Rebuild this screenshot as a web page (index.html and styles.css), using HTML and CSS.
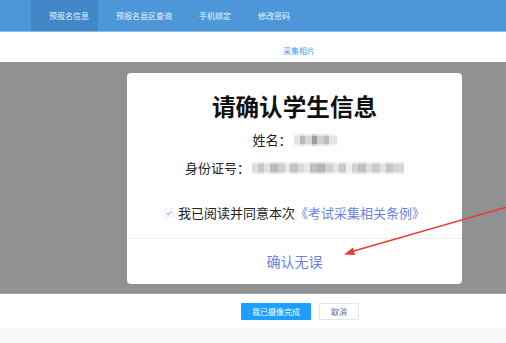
FILE: index.html
```html
<!DOCTYPE html>
<html lang="zh">
<head>
<meta charset="utf-8">
<link rel="stylesheet" href="styles.css">
</head>
<body>
<header class="nav">
  <ul class="nav-list">
    <li class="nav-item active">预报名信息</li>
    <li class="nav-item">预报名县区查询</li>
    <li class="nav-item">手机绑定</li>
    <li class="nav-item">修改密码</li>
  </ul>
</header>
<div class="tabbar"><span class="tab-title">采集相片</span></div>
<section class="overlay">
  <div class="modal">
    <div class="modal-body">
      <h1 class="modal-title">请确认学生信息</h1>
      <p class="info-line">姓名：<span class="blur blur-name"></span></p>
      <p class="info-line">身份证号：<span class="blur blur-id"></span></p>
      <p class="agree-line">
        <span class="checkbox"><svg viewBox="0 0 8 8" width="8" height="8"><path d="M1.6 4.2 L3.3 5.8 L6.5 2.3" fill="none" stroke="#5b9bf0" stroke-width="1"/></svg></span>
        我已阅读并同意本次<span class="link">《考试采集相关条例》</span>
      </p>
    </div>
    <div class="modal-footer">确认无误</div>
  </div>
</section>
<div class="actions">
  <button class="btn btn-primary">我已摄像完成</button>
  <button class="btn btn-default">取消</button>
</div>
<div class="page-bottom"></div>
<svg class="arrow" width="506" height="343" viewBox="0 0 506 343">
  <line x1="507" y1="207" x2="352" y2="251.5" stroke="#ec3a30" stroke-width="1.6"/>
  <polygon points="344,254.5 353,247.5 355,255" fill="#ec3a30"/>
</svg>
</body>
</html>
```

FILE: styles.css
```css
html, body {
  margin: 0;
  padding: 0;
}
body {
  width: 506px;
  height: 343px;
  overflow: hidden;
  position: relative;
  background: #f8f8f8;
  font-family: "Noto Sans CJK SC", "Microsoft YaHei", sans-serif;
}
.nav {
  height: 31px;
  background: #4d97d8;
  border-bottom: 1px solid #8cbbe6;
}
.nav-list {
  list-style: none;
  margin: 0;
  padding: 0 0 0 31px;
  display: flex;
  height: 31px;
}
.nav-item {
  padding: 0 9px 0 18px;
  font-size: 8px;
  line-height: 31px;
  color: #eaf3fc;
  white-space: nowrap;
}
.nav-item.active {
  background: #4187c8;
}
.tabbar {
  height: 30px;
  background: #fff;
  display: flex;
  justify-content: center;
  align-items: center;
  padding-left: 92px;
  box-sizing: border-box;
}
.tab-title {
  font-size: 8px;
  color: #3e9ff0;
  padding-top: 7px;
}
.overlay {
  height: 232px;
  background: #909192;
  padding: 11px 0 0 127px;
  box-sizing: border-box;
  border-bottom: 1px solid #a0a0a0;
}
.modal {
  width: 335px;
  height: 211px;
  background: #fff;
  border-radius: 4px;
  display: flex;
  flex-direction: column;
}
.modal-body {
  padding-top: 18px;
  text-align: center;
  border-bottom: 1px solid #eeeeee;
  height: 166px;
  box-sizing: border-box;
}
.modal-title {
  margin: 0;
  font-size: 23.6px;
  line-height: 30px;
  font-weight: 700;
  color: #111;
}
.info-line {
  margin: 9px 0 0;
  font-size: 13px;
  line-height: 20px;
  color: #222;
  display: flex;
  justify-content: center;
  align-items: center;
}
.info-line + .info-line {
  margin-top: 8px;
}
.blur {
  display: inline-block;
  height: 12px;
  margin-left: 2px;
}
.blur-name {
  width: 43px;
  background:
    linear-gradient(180deg, rgba(255,255,255,0.55) 0 20%, rgba(255,255,255,0) 20% 80%, rgba(255,255,255,0.55) 80%),
    linear-gradient(90deg, #e3e3e3 0 14%, #b8b8b8 14% 26%, #d5d5d5 26% 42%, #9e9e9e 42% 54%, #cfcfcf 54% 70%, #bdbdbd 70% 82%, #e4e4e4 82%);
}
.blur-id {
  width: 152px;
  background:
    linear-gradient(180deg, rgba(255,255,255,0.5) 0 20%, rgba(255,255,255,0) 20% 80%, rgba(255,255,255,0.5) 80%),
    linear-gradient(90deg, #dcdcdc 0 4%, #c6c6c6 4% 8%, #e2e2e2 8% 12%, #bcbcbc 12% 17%, #cdcdcd 17% 22%, #e6e6e6 22% 25%, #c2c2c2 25% 30%, #d8d8d8 30% 34%, #e8e8e8 34% 38%, #bfbfbf 38% 43%, #b3b3b3 43% 48%, #d0d0d0 48% 53%, #e4e4e4 53% 57%, #c8c8c8 57% 62%, #eeeeee 62% 66%, #d2d2d2 66% 70%, #c0c0c0 70% 75%, #dedede 75% 79%, #cacaca 79% 84%, #e2e2e2 84% 88%, #c4c4c4 88% 93%, #d6d6d6 93%);
}
.agree-line {
  margin: 25px 0 0;
  font-size: 13px;
  line-height: 20px;
  color: #222;
  display: flex;
  justify-content: center;
  align-items: center;
}
.checkbox {
  display: inline-flex;
  width: 8px;
  height: 8px;
  margin-right: 4px;
  border: 1px solid #eef2f8;
  background: #f7f9fd;
}
.link {
  color: #6a82e8;
}
.modal-footer {
  flex: 1;
  display: flex;
  align-items: center;
  justify-content: center;
  font-size: 14px;
  color: #6a82e0;
  padding-bottom: 1px;
}
.actions {
  height: 34px;
  background: #fff;
  display: flex;
  align-items: center;
  gap: 8px;
  padding: 1px 0 0 241px;
  box-sizing: border-box;
}
.btn {
  height: 17px;
  font-family: inherit;
  font-size: 8px;
  padding: 0;
  border-radius: 1px;
  cursor: pointer;
}
.btn-primary {
  width: 70px;
  background: #1e9fff;
  color: #fff;
  border: none;
}
.btn-default {
  width: 40px;
  background: #fff;
  color: #666;
  border: 1px solid #e6e6e6;
}
.page-bottom {
  height: 15px;
  background: #f8f8f8;
}
.arrow {
  position: absolute;
  left: 0;
  top: 0;
  pointer-events: none;
}
```
